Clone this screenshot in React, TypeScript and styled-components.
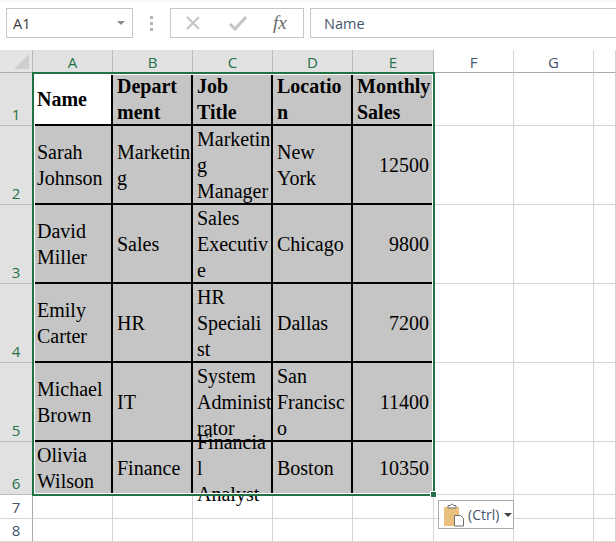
import styled, { createGlobalStyle } from "styled-components";

const GlobalStyle = createGlobalStyle`
    html, body {
        margin: 0;
        padding: 0;
        background: #fff;
        overflow: hidden;
    }
`;

const Page = styled.div`
    width: 616px;
    height: 542px;
    position: relative;
    overflow: hidden;
    font-family: "Open Sans", "Liberation Sans", sans-serif;
    background: #fff;
`;

const Toolbar = styled.div`
    height: 50px;
    box-sizing: border-box;
    padding: 8px 0 0 6px;
    display: flex;
    align-items: flex-start;
    background: linear-gradient(#f7f7f7 0, #fff 4px);
`;

const NameBox = styled.div`
    width: 127px;
    height: 30px;
    box-sizing: border-box;
    border: 1px solid #c6c6c6;
    background: #fff;
    display: flex;
    align-items: center;
    justify-content: space-between;
    padding: 0 7px 0 6px;
    font-size: 14.5px;
    color: #3c3c3c;
`;

const Caret = styled.span`
    width: 0;
    height: 0;
    border-left: 4px solid transparent;
    border-right: 4px solid transparent;
    border-top: 4px solid #8a8a8a;
`;

const Grip = styled.div`
    width: 37px;
    height: 30px;
    display: flex;
    flex-direction: column;
    align-items: center;
    justify-content: center;
    gap: 3px;
    span {
        width: 3px;
        height: 3px;
        background: #b4b4b4;
    }
`;

const FormulaButtons = styled.div`
    width: 134px;
    height: 30px;
    box-sizing: border-box;
    border: 1px solid #c6c6c6;
    background: #fff;
    display: flex;
    align-items: center;
    padding-left: 14px;
    gap: 28px;
`;

const FxLabel = styled.span`
    font-family: "Liberation Serif", serif;
    font-style: italic;
    font-size: 19px;
    color: #6a6a6a;
    margin-left: -2px;
`;

const FormulaInput = styled.div`
    flex: 1;
    height: 30px;
    box-sizing: border-box;
    border: 1px solid #c6c6c6;
    border-right: none;
    margin-left: 6px;
    padding-left: 13px;
    background: #fff;
    display: flex;
    align-items: center;
    font-size: 14.5px;
    color: #44546a;
`;

const Sheet = styled.div`
    display: grid;
    grid-template-columns: 33px repeat(4, 80px) 81px 80px 80px 22px;
    grid-template-rows: 23px 53px 79px 79px 79px 79px 53px 24px 23px;
`;

const Corner = styled.div`
    background: #e6e6e6;
    border-right: 1px solid #b8b8b8;
    border-bottom: 1px solid #b0b0b0;
    box-sizing: border-box;
    position: relative;
    background: #e4e4e4;
    &::after {
        content: "";
        position: absolute;
        right: 3px;
        bottom: 3px;
        width: 0;
        height: 0;
        border-left: 15px solid transparent;
        border-bottom: 15px solid #cfcfcf;
    }
`;

const ColHead = styled.div<{ $active: boolean }>`
    box-sizing: border-box;
    display: flex;
    align-items: center;
    justify-content: center;
    font-size: 15px;
    padding-top: 1px;
    background: ${({ $active }) => ($active ? "#e1e1e1" : "#fff")};
    color: ${({ $active }) => ($active ? "#217346" : "#44546a")};
    border-right: 1px solid ${({ $active }) => ($active ? "#bdbdbd" : "#d4d4d4")};
    border-bottom: 1px solid #ababab;
`;

const RowHead = styled.div<{ $active: boolean }>`
    box-sizing: border-box;
    display: flex;
    align-items: flex-end;
    justify-content: center;
    font-size: 15px;
    line-height: 22px;
    background: ${({ $active }) => ($active ? "#e1e1e1" : "#fff")};
    color: ${({ $active }) => ($active ? "#217346" : "#44546a")};
    border-right: 1px solid #ababab;
    border-bottom: 1px solid ${({ $active }) => ($active ? "#bdbdbd" : "#d4d4d4")};
`;

const Cell = styled.div<{ $bold?: boolean; $white?: boolean; $right?: boolean }>`
    box-sizing: border-box;
    display: flex;
    align-items: center;
    justify-content: ${({ $right }) => ($right ? "flex-end" : "flex-start")};
    padding: 0 3px 0 4px;
    white-space: pre-line;
    font-family: "Liberation Serif", serif;
    font-size: 20px;
    line-height: 26px;
    font-weight: ${({ $bold }) => ($bold ? 700 : 400)};
    color: #000;
    background: ${({ $white }) => ($white ? "#fff" : "#c5c5c5")};
    border-right: 2px solid #000;
    border-bottom: 2px solid #000;
`;

const EmptyCell = styled.div`
    box-sizing: border-box;
    border-right: 1px solid #d4d4d4;
    border-bottom: 1px solid #d4d4d4;
`;

const Selection = styled.div`
    position: absolute;
    left: 32px;
    top: 72px;
    width: 403px;
    height: 424px;
    box-sizing: border-box;
    border: 2px solid #217346;
    box-shadow: inset 0 0 0 1px #fff;
    pointer-events: none;
    &::after {
        content: "";
        position: absolute;
        right: -4px;
        bottom: -4px;
        width: 5px;
        height: 5px;
        background: #217346;
        border: 1px solid #fff;
    }
`;

const PasteTag = styled.div`
    position: absolute;
    left: 438px;
    top: 500px;
    width: 76px;
    height: 29px;
    box-sizing: border-box;
    border: 1px solid #ababab;
    background: #fff;
    display: flex;
    align-items: center;
    padding-left: 4px;
    gap: 1px;
    font-size: 14px;
    color: #44546a;
`;

const TagCaret = styled(Caret)`
    margin-left: 4px;
    border-top-color: #444;
`;

const columns = ["A", "B", "C", "D", "E", "F", "G", ""];

const rows = [
    ["Name", "Depart\nment", "Job\nTitle", "Locatio\nn", "Monthly\nSales"],
    ["Sarah\nJohnson", "Marketin\ng", "Marketin\ng\nManager", "New\nYork", "12500"],
    ["David\nMiller", "Sales", "Sales\nExecutiv\ne", "Chicago", "9800"],
    ["Emily\nCarter", "HR", "HR\nSpeciali\nst", "Dallas", "7200"],
    ["Michael\nBrown", "IT", "System\nAdminist\nrator", "San\nFrancisc\no", "11400"],
    ["Olivia\nWilson", "Finance", "Financia\nl Analyst", "Boston", "10350"],
];

const CancelIcon = () => (
    <svg width="16" height="16" viewBox="0 0 16 16" fill="none" stroke="#c4c4c4" strokeWidth="2">
        <path d="M2 2l12 12M14 2L2 14" />
    </svg>
);

const CheckIcon = () => (
    <svg width="18" height="16" viewBox="0 0 18 16" fill="none" stroke="#c4c4c4" strokeWidth="3">
        <path d="M1 9l5 5L17 2" />
    </svg>
);

const PasteIcon = () => (
    <svg width="24" height="24" viewBox="0 0 24 24">
        <rect x="1" y="4" width="15" height="19" fill="#e9c07e" />
        <path d="M5 5V2.5h2.5L8.5 1h1l1 1.500H13V5z" fill="#fff" stroke="#6e6e6e" strokeWidth="1" />
        <path d="M11.500 12.500h6l3 3v7.500h-9z" fill="#fff" stroke="#6e6e6e" strokeWidth="1" />
    </svg>
);

export default function App() {
    return (
        <Page>
            <GlobalStyle />
            <Toolbar>
                <NameBox>
                    A1
                    <Caret />
                </NameBox>
                <Grip>
                    <span />
                    <span />
                    <span />
                </Grip>
                <FormulaButtons>
                    <CancelIcon />
                    <CheckIcon />
                    <FxLabel>fx</FxLabel>
                </FormulaButtons>
                <FormulaInput>Name</FormulaInput>
            </Toolbar>
            <Sheet>
                <Corner />
                {columns.map((col, i) => (
                    <ColHead key={i} $active={i < 5}>
                        {col}
                    </ColHead>
                ))}
                {rows.map((row, r) => (
                    <>
                        <RowHead key={`h${r}`} $active>
                            {r + 1}
                        </RowHead>
                        {row.map((text, c) => (
                            <Cell
                                key={`${r}-${c}`}
                                $bold={r === 0}
                                $white={r === 0 && c === 0}
                                $right={r > 0 && c === 4}
                            >
                                {text}
                            </Cell>
                        ))}
                        <EmptyCell />
                        <EmptyCell />
                        <EmptyCell />
                    </>
                ))}
                {[7, 8].map((n) => (
                    <>
                        <RowHead key={`h${n}`} $active={false}>
                            {n}
                        </RowHead>
                        {columns.map((_, c) => (
                            <EmptyCell key={`${n}-${c}`} />
                        ))}
                    </>
                ))}
            </Sheet>
            <Selection />
            <PasteTag>
                <PasteIcon />
                (Ctrl)
                <TagCaret />
            </PasteTag>
        </Page>
    );
}
